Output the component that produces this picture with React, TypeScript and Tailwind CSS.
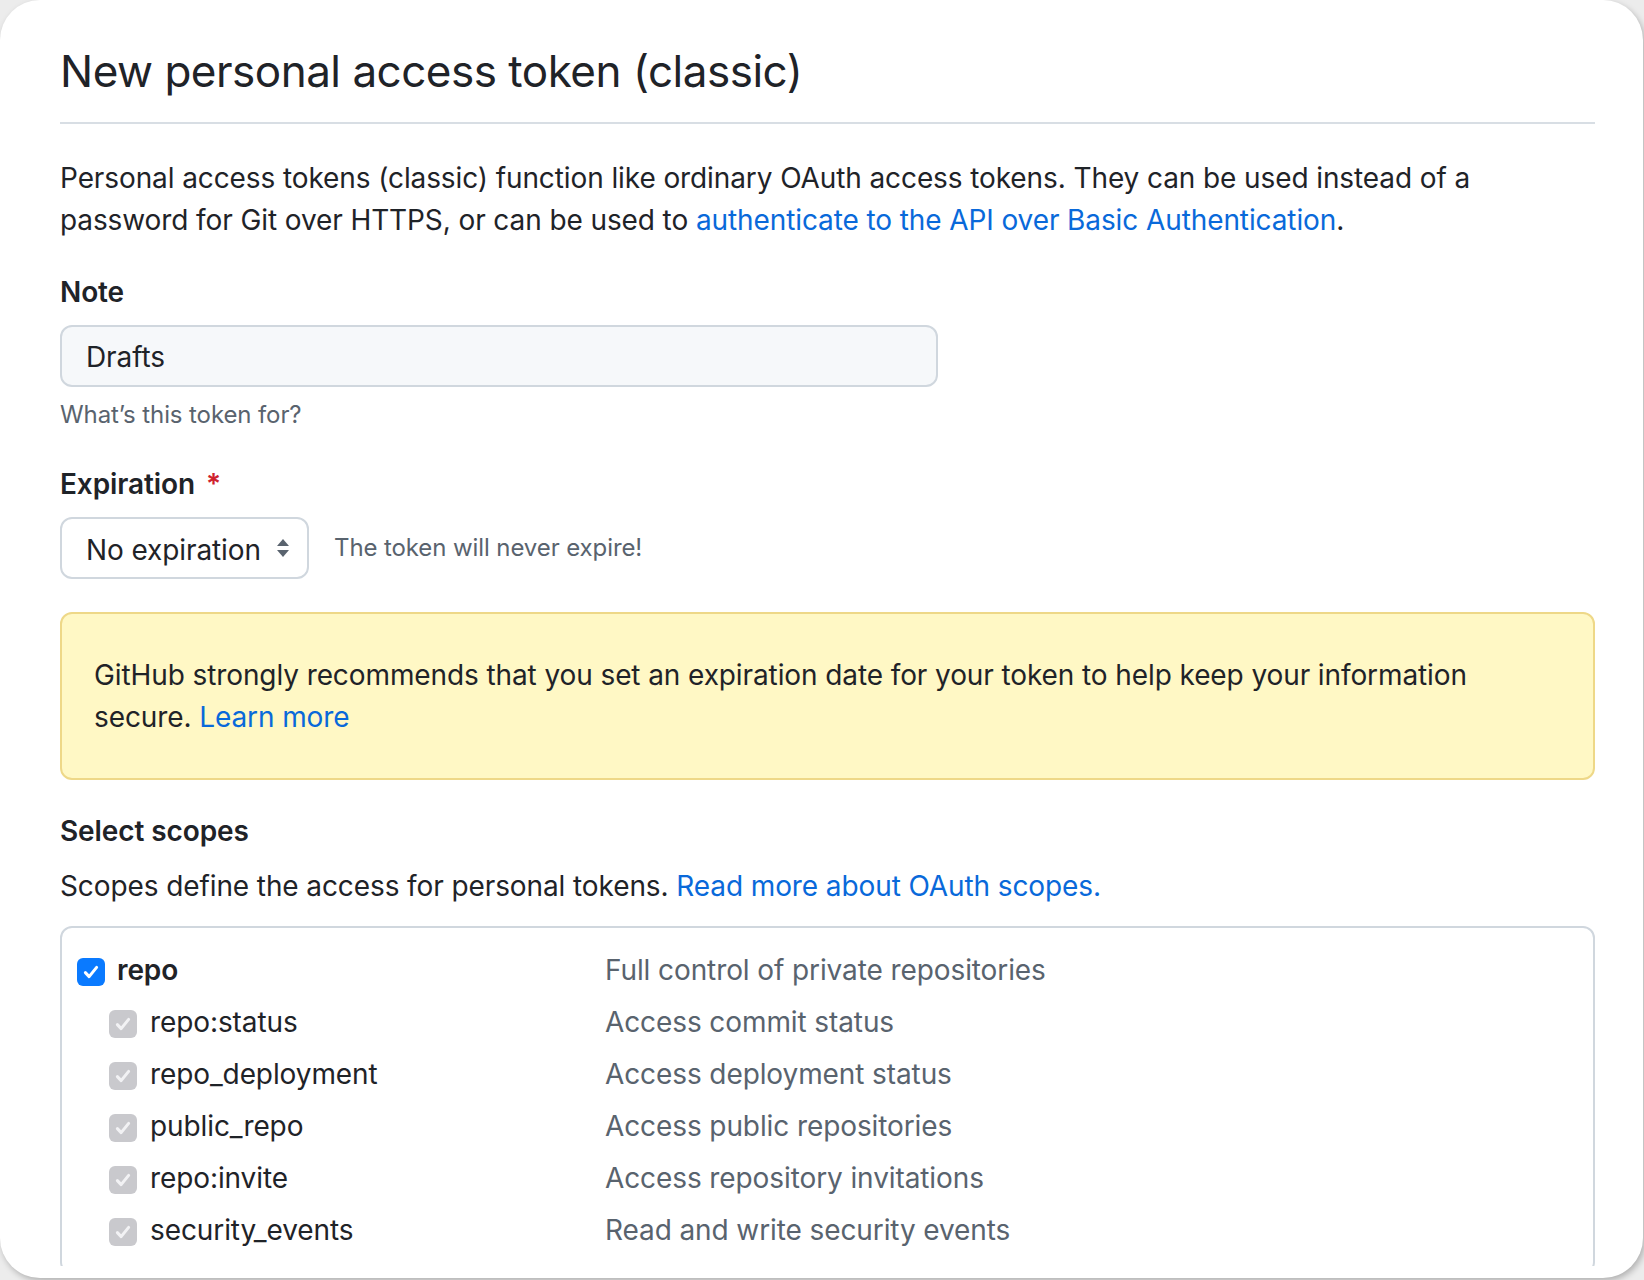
const scopes = [
  { name: 'repo:status', desc: 'Access commit status' },
  { name: 'repo_deployment', desc: 'Access deployment status' },
  { name: 'public_repo', desc: 'Access public repositories' },
  { name: 'repo:invite', desc: 'Access repository invitations' },
  { name: 'security_events', desc: 'Read and write security events' },
];

function Check({ disabled }: { disabled?: boolean }) {
  return (
    <span
      className={`flex h-[28px] w-[28px] shrink-0 translate-y-[2px] items-center justify-center rounded-[6px] ${
        disabled ? 'bg-[#c9c9cd]' : 'bg-[#0a7aff]'
      }`}
    >
      <svg viewBox="0 0 16 16" className="h-[20px] w-[20px]" fill="none">
        <path
          d="M3.5 8.5l3 3.2 6-7.4"
          stroke={disabled ? '#f2f2f4' : '#ffffff'}
          strokeWidth="2.4"
          strokeLinecap="round"
          strokeLinejoin="round"
        />
      </svg>
    </span>
  );
}

export default function App() {
  return (
    <div
      className="min-h-screen bg-[#ececec] text-[#1f2328] tracking-[-0.1px]"
      style={{ fontFamily: 'Inter, "Noto Sans", sans-serif' }}
    >
      <div className="flex h-[1278px] w-[1643px] flex-col overflow-hidden rounded-[40px] bg-white pb-[12px] pl-[60px] pr-[48px] shadow-[2px_3px_6px_rgba(0,0,0,0.25)]">
        <div className="flex min-h-0 flex-1 flex-col overflow-hidden">
          <div className="border-b-2 border-[#d8dee4] pb-[21px] pt-[41px]">
            <h2 className="text-[44px] font-normal leading-[60px] tracking-[-0.5px]">
              New personal access token (classic)
            </h2>
          </div>

          <p className="mt-[33px] text-[28px] leading-[42px]">
            Personal access tokens (classic) function like ordinary OAuth access tokens. They can be used instead of a
            password for Git over HTTPS, or can be used to{' '}
            <a className="text-[#0969da]">authenticate to the API over Basic Authentication</a>.
          </p>

          <div className="mt-[30px]">
            <label className="block text-[28px] font-semibold leading-[42px]">Note</label>
            <div className="mt-[12px] flex h-[62px] w-[878px] items-center rounded-[12px] border-2 border-[#d0d7de] bg-[#f6f8fa] px-[24px] pt-[2px] text-[28px]">
              Drafts
            </div>
            <p className="mt-[10px] text-[24px] leading-[36px] text-[#59636e]">What’s this token for?</p>
          </div>

          <div className="mt-[30px]">
            <label className="block text-[28px] font-semibold leading-[42px]">
              Expiration <span className="ml-[4px] text-[#cf222e]">*</span>
            </label>
            <div className="mt-[12px] flex items-center">
              <div className="flex h-[62px] w-[249px] items-center justify-between rounded-[12px] border-2 border-[#d0d7de] bg-white pl-[24px] pr-[16px] text-[28px]">
                <span className="pt-[3px]">No expiration</span>
                <svg viewBox="0 0 16 20" className="h-[20px] w-[16px]">
                  <path d="M8 1L14 8H2z" fill="#59636e" />
                  <path d="M8 19L2 12h12z" fill="#59636e" />
                </svg>
              </div>
              <span className="ml-[25px] text-[24px] leading-[36px] text-[#59636e]">The token will never expire!</span>
            </div>
          </div>

          <div className="mt-[33px] rounded-[12px] border-2 border-[#eed888] bg-[#fff8c5] px-[32px] py-[40px] text-[28px] leading-[42px]">
            GitHub strongly recommends that you set an expiration date for your token to help keep your information
            secure. <a className="text-[#0969da]">Learn more</a>
          </div>

          <h3 className="mt-[30px] text-[28px] font-semibold leading-[42px]">Select scopes</h3>
          <p className="mt-[13px] text-[28px] leading-[42px]">
            Scopes define the access for personal tokens.{' '}
            <a className="text-[#0969da]">Read more about OAuth scopes.</a>
          </p>

          <div className="mt-[19px] rounded-[12px] border-2 border-[#d0d7de] pb-[16px] pl-[15px] pt-[16px] text-[28px]">
            <div className="grid h-[52px] grid-cols-[528px_1fr] items-center">
              <div className="flex items-center gap-[12px]">
                <Check />
                <span className="font-semibold">repo</span>
              </div>
              <span className="text-[#59636e]">Full control of private repositories</span>
            </div>
            {scopes.map((s) => (
              <div key={s.name} className="grid h-[52px] grid-cols-[528px_1fr] items-center">
                <div className="flex items-center gap-[13px] pl-[32px]">
                  <Check disabled />
                  <span>{s.name}</span>
                </div>
                <span className="text-[#59636e]">{s.desc}</span>
              </div>
            ))}
          </div>
        </div>
      </div>
    </div>
  );
}
